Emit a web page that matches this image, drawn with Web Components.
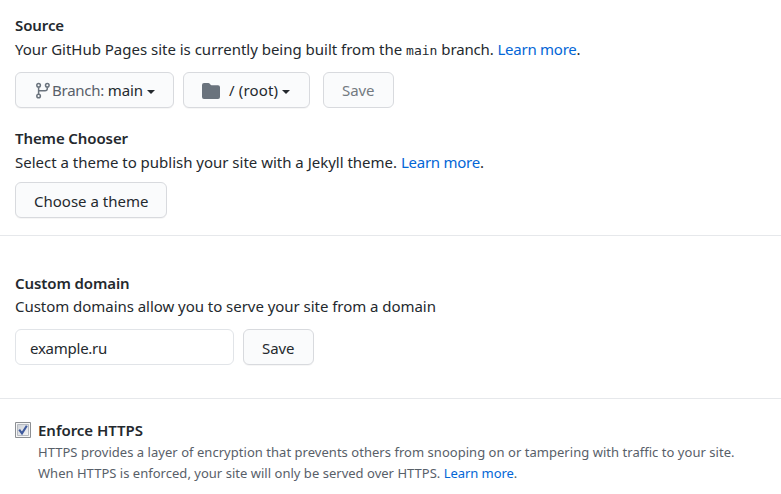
<!DOCTYPE html>
<html lang="en">
<head>
<meta charset="utf-8">
<title>GitHub Pages settings</title>
<style>
body { margin: 0; background: #fff; color: #24292e; font: 15px/24px "Noto Sans", "Open Sans", sans-serif; }
</style>
</head>
<body>
<pages-settings></pages-settings>
<script>
function define(name, html, setup) {
  const template = document.createElement('template');
  template.innerHTML = html;
  customElements.define(name, class extends HTMLElement {
    constructor() {
      super();
      this.attachShadow({ mode: 'open' }).append(template.content.cloneNode(true));
    }
    connectedCallback() { if (setup) setup(this, this.shadowRoot); }
  });
}

define('doc-link', `<style>
:host { display: inline; letter-spacing: var(--link-ls, -.25px); }
a { color: #0366d6; text-decoration: none; }
</style><a href="#"><slot></slot></a>`);

define('push-button', `<style>
:host { display: block; width: var(--w); flex: none; }
button { box-sizing: border-box; width: 100%; height: 36px; display: flex; align-items: center; padding: 0 0 0 var(--pl, 18px);
  border: 1px solid #d8dade; border-radius: 6px; background: #fafbfc; box-shadow: 0 1px 0 rgba(27,31,35,.04);
  color: #24292e; font: inherit; line-height: 24px; letter-spacing: inherit; white-space: pre; text-align: left; }
:host([disabled]) button { color: #737a81; box-shadow: none; }
</style><button type="button"><slot></slot></button>`, (el, root) => {
  root.querySelector('button').disabled = el.hasAttribute('disabled');
});

define('menu-caret', `<style>
:host { display: block; width: 8px; height: 4px; margin: 3px 0 0 4px; }
svg { display: block; }
</style><svg width="8" height="4"><path d="M0 0h8L4 4z" fill="#24292e"/></svg>`);

define('branch-icon', `<style>
:host { display: block; width: 16px; height: 18px; margin-top: 2px; }
svg { display: block; }
</style><svg width="16" height="18" viewBox="0 0 16 18" fill="none" stroke="#6a737d" stroke-width="1.5">
<circle cx="3.6" cy="3.3" r="1.8"/><circle cx="3.6" cy="14" r="1.8"/><circle cx="12.3" cy="3.3" r="1.8"/>
<path d="M3.6 5.2v7M12.3 5.2v1.2q0 2.3-2.3 2.3H3.6"/></svg>`);

define('folder-icon', `<style>
:host { display: block; width: 18px; height: 16px; margin-top: 1px; }
svg { display: block; }
</style><svg width="18" height="16"><path d="M2 0h4.2q1 0 1.6.8l.8 1q.3.4.9.4H16q2 0 2 2V14q0 2-2 2H2q-2 0-2-2V2q0-2 2-2z" fill="#6a737d"/></svg>`);

define('text-field', `<style>
:host { display: block; width: 219px; }
input { box-sizing: border-box; width: 100%; height: 36px; padding: 2px 14px 0; border: 1px solid #e1e4e8; border-radius: 6px;
  background: #fff; color: #24292e; font: inherit; letter-spacing: -.25px; outline: 0; }
</style><input type="text">`, (el, root) => {
  root.querySelector('input').value = el.getAttribute('value');
});

define('check-box', `<style>
:host { display: block; width: 16px; height: 16px; }
svg { display: block; }
</style><svg width="16" height="16" role="checkbox" aria-checked="true">
<defs><linearGradient id="g" x2="1" y2="1"><stop stop-color="#cdd1d7"/><stop offset="1" stop-color="#f6f6f7"/></linearGradient></defs>
<path d="M.5.5h15v15H.5z" fill="#f6f6f6" stroke="#8c8f93"/><path d="M2.5 2.5h11v11h-11z" fill="url(#g)" stroke="#b6bac1"/>
<path d="M4.2 7.6l2.8 3.7L11.8 3.8" fill="none" stroke="#3f5a9d" stroke-width="2.1"/></svg>`);

define('setting-block', `<style>
:host { display: block; }
h4 { margin: 0; font-size: 15px; font-weight: 600; line-height: var(--title-h, 24px); letter-spacing: var(--title-ls, -.1px); }
p { margin: 0; white-space: nowrap; letter-spacing: var(--text-ls, 0); }
.row { display: flex; gap: 9px; margin-top: var(--gap, 10px); }
</style><h4><slot name="title"></slot></h4><p><slot></slot></p><div class="row"><slot name="controls"></slot></div>`);

define('enforce-option', `<style>
:host { display: flex; gap: 7px; }
check-box { margin-top: 4px; }
h4 { margin: 0; font-size: 15px; font-weight: 600; line-height: 24px; letter-spacing: -.03px; }
p { margin: 0; font-size: 13px; line-height: 21px; color: #586069; white-space: nowrap; letter-spacing: .02px; --link-ls: -.07px; }
</style><check-box></check-box><div><h4><slot name="title"></slot></h4><p><slot></slot></p></div>`);

define('pages-settings', `<style>
:host { display: block; width: 781px; height: 494px; overflow: hidden; }
section { box-sizing: border-box; padding: 0 15px; }
section + section { border-top: 1px solid #e6e8eb; }
.source { height: 235px; padding-top: 13px; }
.domain { height: 163px; padding-top: 36px; }
.https { padding-top: 19px; }
.theme { margin-top: 19px; }
.muted { color: #586069; letter-spacing: -.25px; }
code { font: 13px "DejaVu Sans Mono", monospace; letter-spacing: 0; }
.long { letter-spacing: .034px; }
</style>
<section class="source">
<setting-block style="--text-ls:-.01px;--gap:11px"><span slot="title">Source</span>Your GitHub Pages site is currently being built from the <code>main</code> <span style="letter-spacing:-.15px">branch.</span> <doc-link>Learn more</doc-link>.
<push-button slot="controls" style="--w:159px;--pl:19px"><branch-icon></branch-icon><span style="margin-left:1px" class="muted">Branch: </span><span style="letter-spacing:-.1px">main</span><menu-caret></menu-caret></push-button>
<push-button slot="controls" style="--w:127px"><folder-icon></folder-icon><span style="margin-left:9px;letter-spacing:.15px">/ (root)</span><menu-caret></menu-caret></push-button>
<push-button slot="controls" disabled style="--w:71px;margin-left:4px;letter-spacing:-.1px">Save</push-button>
</setting-block>
<setting-block class="theme" style="--title-h:23px;--gap:8px;--text-ls:-.01px"><span slot="title">Theme Chooser</span>Select a theme to publish your site with a Jekyll theme. <doc-link>Learn more</doc-link>.
<push-button slot="controls" style="--w:152px"><span style="padding-top:2px">Choose a theme</span></push-button>
</setting-block>
</section>
<section class="domain">
<setting-block style="--title-h:22px;--title-ls:-.1px;--text-ls:-.04px;--gap:11px"><span slot="title">Custom domain</span>Custom domains allow you to serve your site from a domain
<text-field slot="controls" value="example.ru"></text-field>
<push-button slot="controls" style="--w:71px;letter-spacing:-.1px"><span style="padding-top:2px">Save</span></push-button>
</setting-block>
</section>
<section class="https">
<enforce-option><span slot="title">Enforce HTTPS</span><span class="long">HTTPS provides a layer of encryption that prevents others from snooping on or tampering with traffic to your site.</span><br>When HTTPS is enforced, your site will only be served over HTTPS. <doc-link>Learn more</doc-link>.</enforce-option>
</section>`);
</script>
</body>
</html>
